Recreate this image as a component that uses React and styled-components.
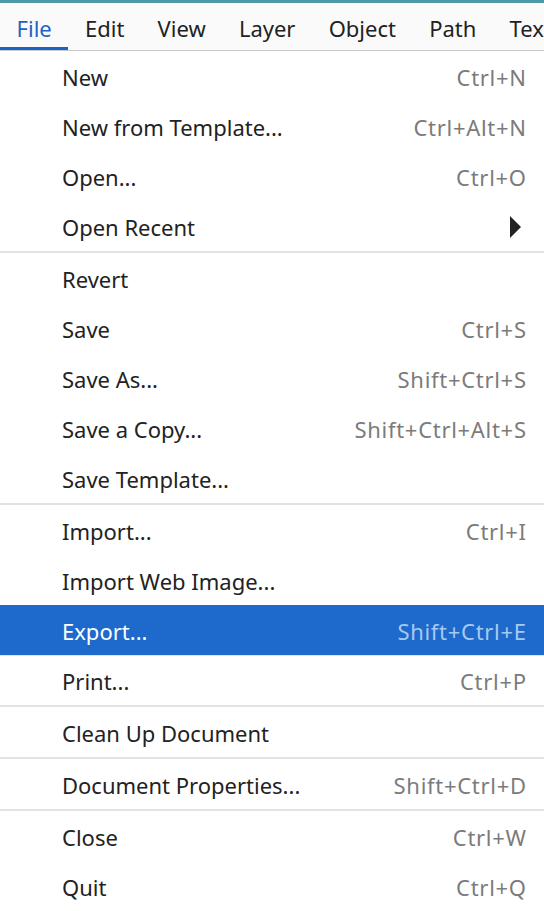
import React from "react";
import styled, { createGlobalStyle } from "styled-components";

const Global = createGlobalStyle`
  html, body { margin: 0; padding: 0; background: #ffffff; }
  body { font-family: "Noto Sans", "Open Sans", sans-serif; overflow: hidden; }
`;

const Page = styled.div`
  width: 544px;
  height: 911px;
  overflow: hidden;
  background: #ffffff;
  display: flex;
  flex-direction: column;
`;

const TopStrip = styled.div`
  height: 3px;
  background: #4b98a7;
  flex: none;
`;

const MenuBar = styled.div`
  display: flex;
  height: 47px;
  background: #fafafa;
  border-bottom: 1px solid #c9c9c9;
  flex: none;
  white-space: nowrap;
`;

const BarItem = styled.div`
  padding: 3px 16.6px 0;
  display: flex;
  align-items: center;
  font-size: 22px;
  color: ${(p) => (p.$active ? "#1f63c0" : "#222222")};
  box-shadow: ${(p) => (p.$active ? "inset 0 -3px 0 #1c63c6" : "none")};
`;

const Dropdown = styled.div`
  display: flex;
  flex-direction: column;
`;

const Row = styled.div`
  height: 50px;
  display: flex;
  align-items: center;
  justify-content: space-between;
  padding: 2px 18px 0 62px;
  box-sizing: border-box;
  font-size: 22px;
  white-space: nowrap;
  background: ${(p) => (p.$hl ? "#1e69cc" : "transparent")};
  color: ${(p) => (p.$hl ? "#ffffff" : "#222222")};
  box-shadow: ${(p) => (p.$hl ? "0 1px 0 #d6e6f7" : "none")};
`;

const Shortcut = styled.span`
  letter-spacing: 0.7px;
  margin-right: -0.7px;
  color: ${(p) => (p.$hl ? "#a8c9f0" : "#7b7b7b")};
`;

const Arrow = styled.svg`
  width: 13px;
  height: 24px;
  margin-right: 4px;
`;

const Separator = styled.div`
  height: 2px;
  background: #e2e2e2;
`;

const groups = [
  [
    ["New", "Ctrl+N"],
    ["New from Template...", "Ctrl+Alt+N"],
    ["Open...", "Ctrl+O"],
    ["Open Recent", "arrow"],
  ],
  [
    ["Revert", ""],
    ["Save", "Ctrl+S"],
    ["Save As...", "Shift+Ctrl+S"],
    ["Save a Copy...", "Shift+Ctrl+Alt+S"],
    ["Save Template...", ""],
  ],
  [
    ["Import...", "Ctrl+I"],
    ["Import Web Image...", ""],
    ["Export...", "Shift+Ctrl+E", true],
    ["Print...", "Ctrl+P"],
  ],
  [["Clean Up Document", ""]],
  [["Document Properties...", "Shift+Ctrl+D"]],
  [
    ["Close", "Ctrl+W"],
    ["Quit", "Ctrl+Q"],
  ],
];

const barItems = ["File", "Edit", "View", "Layer", "Object", "Path", "Text"];

export default function App() {
  return (
    <Page>
      <Global />
      <TopStrip />
      <MenuBar>
        {barItems.map((t, i) => (
          <BarItem key={t} $active={i === 0}>
            {t}
          </BarItem>
        ))}
      </MenuBar>
      <Dropdown>
        {groups.map((g, gi) => (
          <React.Fragment key={gi}>
            {gi > 0 && <Separator />}
            {g.map(([label, sc, hl]) => (
              <Row key={label} $hl={hl}>
                <span>{label}</span>
                {sc === "arrow" ? (
                  <Arrow viewBox="0 0 13 24">
                    <path d="M1 1 L12 12 L1 23 Z" fill="#222222" />
                  </Arrow>
                ) : (
                  <Shortcut $hl={hl}>{sc}</Shortcut>
                )}
              </Row>
            ))}
          </React.Fragment>
        ))}
      </Dropdown>
    </Page>
  );
}
